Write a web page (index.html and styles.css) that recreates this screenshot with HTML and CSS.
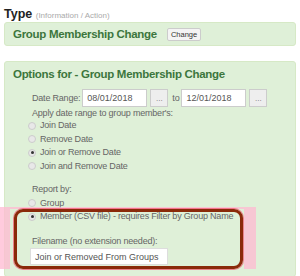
FILE: index.html
```html
<!DOCTYPE html>
<html lang="en">
<head>
  <meta charset="UTF-8" />
  <title>Group Membership Change</title>
  <link rel="stylesheet" href="styles.css">
</head>
<body>
  <div class="type"><b>Type</b> <span class="hint">(Information / Action)</span></div>

  <div class="panel head-panel">
    <span class="title">Group Membership Change</span>
    <button class="btn">Change</button>
  </div>

  <div class="panel options">
    <div class="title">Options for - Group Membership Change</div>

    <div class="body">
      <div class="date-row">
        <span>Date Range:</span>
        <input class="date" type="text" value="08/01/2018">
        <button class="dots">...</button>
        <span>to</span>
        <input class="date" type="text" value="12/01/2018">
        <button class="dots">...</button>
      </div>
      <div class="line">Apply date range to group member's:</div>
      <label class="radio"><span class="dot"></span>Join Date</label>
      <label class="radio"><span class="dot"></span>Remove Date</label>
      <label class="radio"><span class="dot on"></span>Join or Remove Date</label>
      <label class="radio"><span class="dot"></span>Join and Remove Date</label>

      <div class="line gap">Report by:</div>
      <label class="radio"><span class="dot"></span>Group</label>
      <label class="radio"><span class="dot on"></span>Member (CSV file) - requires Filter by Group Name</label>

      <div class="line fname">Filename (no extension needed):</div>
      <input class="filename" type="text" value="Join or Removed From Groups">
    </div>

    <div class="glow"></div>
    <div class="ring"></div>
  </div>
</body>
</html>
```

FILE: styles.css
```css
body {
  margin: 0;
  padding: 6px 4px 0;
  font-family: "Liberation Sans", Arial, sans-serif;
  color: #666;
  background: #fff;
}
.type {
  font-size: 12.5px;
  color: #222;
  height: 16px;
  line-height: 16px;
}
.type .hint {
  font-size: 8px;
  color: #aaa;
}
.panel {
  background: #dff0d8;
  border: 1px solid #d6e9c6;
  border-radius: 3px;
}
.title {
  color: #3c763d;
  font-weight: bold;
  font-size: 11.5px;
  letter-spacing: -0.3px;
  line-height: 13px;
}
.head-panel {
  height: 22px;
  display: flex;
  align-items: center;
  padding-left: 8px;
}
.btn {
  margin-left: 10px;
  font-family: "Liberation Sans", Arial, sans-serif;
  font-size: 7.5px;
  padding: 1px 3px;
  height: 13px;
  background: #f4f4f4;
  border: 1px solid #ccc;
  border-radius: 2px;
  color: #333;
}
.options {
  position: relative;
  margin-top: 15px;
  height: 208px;
  padding: 6px 8px 0;
}
.body {
  font-size: 9px;
  letter-spacing: -0.2px;
  padding-left: 19px;
  margin-top: 8px;
}
.date-row {
  display: flex;
  align-items: center;
  height: 18px;
  white-space: nowrap;
}
.date {
  width: 55px;
  height: 16px;
  padding: 0 4px;
  border: 1px solid #ccc;
  font-family: "Liberation Sans", Arial, sans-serif;
  font-size: 9px;
  color: #555;
  margin: 0 3px 0 2px;
}
.dots {
  width: 18px;
  height: 18px;
  padding: 0;
  border: 1px solid #ccc;
  background: #eee;
  font-size: 8px;
  color: #777;
  margin-right: 4px;
}
.line {
  line-height: 12px;
}
.line.gap {
  margin-top: 10px;
  line-height: 13.5px;
}
.line.fname {
  margin-top: 11px;
  line-height: 13.5px;
}
.radio {
  display: flex;
  align-items: center;
  line-height: 13.5px;
  margin-left: -4px;
  white-space: nowrap;
}
.dot {
  width: 6px;
  height: 6px;
  border: 1px solid #ccc;
  border-radius: 50%;
  background: #e8e8e8;
  margin-right: 4px;
  position: relative;
}
.dot.on::after {
  content: "";
  position: absolute;
  left: 1.5px;
  top: 1.5px;
  width: 3px;
  height: 3px;
  border-radius: 50%;
  background: #333;
}
.filename {
  display: block;
  width: 128px;
  height: 15px;
  margin-left: -2px;
  padding: 0 4px;
  border: 1px solid #ddd;
  font-family: "Liberation Sans", Arial, sans-serif;
  font-size: 9px;
  color: #555;
}
/* pink highlight band around the marked area */
.glow {
  position: absolute;
  left: -5px;
  top: 145px;
  width: 234px;
  height: 60px;
  border-style: solid;
  border-color: rgba(255, 185, 210, 0.75);
  border-width: 2px 12px 0 10px;
  pointer-events: none;
}
.ring {
  position: absolute;
  left: 9px;
  top: 147px;
  width: 223px;
  height: 54px;
  border: 3px solid #8a2a0a;
  border-radius: 9px;
  box-shadow: 0 0 0 1px rgba(240, 60, 90, 0.6);
  pointer-events: none;
}
```
